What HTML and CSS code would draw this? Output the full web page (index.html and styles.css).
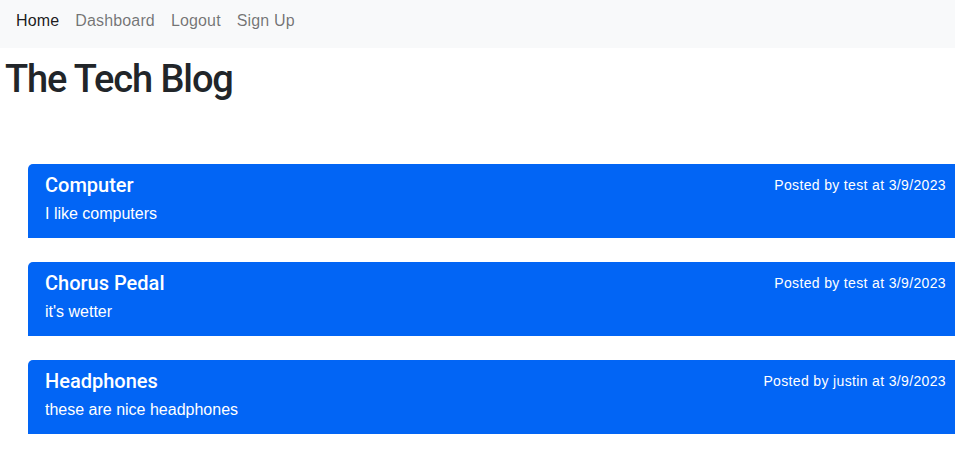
FILE: index.html
```html
<!DOCTYPE html>
<html lang="en">
<head>
<meta charset="utf-8">
<title>The Tech Blog</title>
<link rel="stylesheet" href="styles.css">
</head>
<body>
<nav class="navbar">
  <a class="nav-link active" href="#">Home</a>
  <a class="nav-link" href="#">Dashboard</a>
  <a class="nav-link" href="#">Logout</a>
  <a class="nav-link" href="#">Sign Up</a>
</nav>
<h1 class="site-title">The Tech Blog</h1>
<main class="posts">
  <article class="post">
    <div class="post-head">
      <h2 class="post-title">Computer</h2>
      <span class="post-meta">Posted by test at 3/9/2023</span>
    </div>
    <p class="post-body">I like computers</p>
  </article>
  <article class="post">
    <div class="post-head">
      <h2 class="post-title">Chorus Pedal</h2>
      <span class="post-meta">Posted by test at 3/9/2023</span>
    </div>
    <p class="post-body">it's wetter</p>
  </article>
  <article class="post">
    <div class="post-head">
      <h2 class="post-title">Headphones</h2>
      <span class="post-meta">Posted by justin at 3/9/2023</span>
    </div>
    <p class="post-body">these are nice headphones</p>
  </article>
</main>
</body>
</html>
```
FILE: styles.css
```css
html, body {
  margin: 0;
  padding: 0;
  overflow-x: hidden;
}
body {
  font-family: "Liberation Sans", Arial, sans-serif;
  font-size: 16px;
  line-height: 1.5;
  color: #212529;
  background: #fff;
}
.navbar {
  display: flex;
  background: #f8f9fa;
  height: 48px;
  padding: 0 8px;
  box-sizing: border-box;
}
.nav-link {
  display: block;
  padding: 9px 8px 7px;
  line-height: 24px;
  text-decoration: none;
  color: rgba(0, 0, 0, 0.55);
  letter-spacing: 0.15px;
}
.nav-link.active {
  color: rgba(0, 0, 0, 0.9);
}
.site-title {
  margin: 9px 0 0 5px;
  font-family: Roboto, "Liberation Sans", sans-serif;
  font-size: 38px;
  font-weight: 500;
  line-height: 1.2;
  letter-spacing: -1.1px;
}
.posts {
  display: flex;
  flex-direction: column;
  gap: 24px;
  margin-top: 61px;
  padding-left: 28px;
}
.post {
  width: 934px;
  flex: none;
  box-sizing: border-box;
  background: #0265f5;
  color: #fff;
  border-radius: 5px 5px 0 0;
  padding: 9px 16px 12px 17px;
}
.post-head {
  display: flex;
  justify-content: space-between;
  align-items: flex-start;
}
.post-title {
  margin: 0;
  font-family: Roboto, "Liberation Sans", sans-serif;
  font-size: 20px;
  font-weight: 500;
  line-height: 24px;
}
.post-meta {
  margin-top: 2px;
  font-size: 14px;
  line-height: 21px;
  letter-spacing: 0.35px;
}
.post-body {
  margin: 5px 0 0;
  line-height: 24px;
}
```
